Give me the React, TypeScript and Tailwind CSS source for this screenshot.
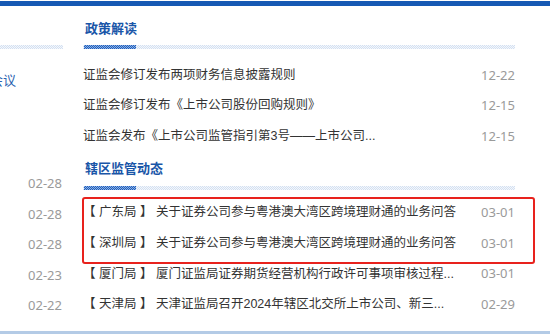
import React from 'react'

const policyNews = [
  { title: '证监会修订发布两项财务信息披露规则', date: '12-22' },
  { title: '证监会修订发布《上市公司股份回购规则》', date: '12-15' },
  { title: '证监会发布《上市公司监管指引第3号——上市公司...', date: '12-15' },
]

const localNews = [
  { bureau: '广东局', title: '关于证券公司参与粤港澳大湾区跨境理财通的业务问答', date: '03-01' },
  { bureau: '深圳局', title: '关于证券公司参与粤港澳大湾区跨境理财通的业务问答', date: '03-01' },
  { bureau: '厦门局', title: '厦门证监局证券期货经营机构行政许可事项审核过程...', date: '03-01' },
  { bureau: '天津局', title: '天津证监局召开2024年辖区北交所上市公司、新三...', date: '02-29' },
]

const leftDates = ['02-28', '02-28', '02-28', '02-23', '02-22']

function Underline({ dark }: { dark: boolean }) {
  return (
    <div className="relative h-[4px] w-full bg-[repeating-conic-gradient(#d3e0f1_0_25%,#f4f7fc_0_50%)] bg-[length:2px_2px]">
      {dark && (
        <div className="absolute left-[1px] top-0 h-[4px] w-[52px] bg-[repeating-conic-gradient(#1d5fc0_0_25%,#8fb0e0_0_50%)] bg-[length:2px_2px]" />
      )}
    </div>
  )
}

function Heading({ text }: { text: string }) {
  return (
    <div className="pl-[2px] text-[13px] font-bold leading-[20px] text-[#1a56a8]">{text}</div>
  )
}

export default function App() {
  return (
    <div className="relative h-[334px] w-[550px] overflow-hidden bg-white font-['Liberation_Sans','Noto_Sans_CJK_SC',sans-serif] [text-spacing-trim:space-all]">
      <div className="mt-[1px] h-[5px] w-full bg-[#1659b4]" />

      <div className="flex h-[325px]">
        {/* left column, cut off by the viewport */}
        <div className="w-[63px] shrink-0">
          <div className="h-[39px]" />
          <Underline dark={false} />
          <div className="ml-[-10px] mt-[22px] text-[13px] leading-[20px] text-[#2a62b0]">会议</div>
          <div className="mt-[77px] pr-[1px] text-right font-['Noto_Sans',sans-serif] text-[13px] text-[#9a9a9a]">
            {leftDates.map((d, i) => (
              <div key={i} className="h-[30.6px] leading-[30.6px]">
                {d}
              </div>
            ))}
          </div>
        </div>

        <div className="ml-[20px] w-[432px] shrink-0">
          <div className="mt-[13px]">
            <Heading text="政策解读" />
          </div>
          <div className="mt-[6px]">
            <Underline dark />
          </div>
          <div className="mt-[11px]">
            {policyNews.map((n, i) => (
              <div key={i} className="flex h-[30.5px] items-center justify-between text-[12.5px] text-[#333]">
                <span>{n.title}</span>
                <span className="font-['Noto_Sans',sans-serif] text-[13px] text-[#9a9a9a]">{n.date}</span>
              </div>
            ))}
          </div>

          <div className="mt-[7px]">
            <Heading text="辖区监管动态" />
          </div>
          <div className="mt-[7px]">
            <Underline dark />
          </div>
          <div className="mt-[8px]">
            {localNews.map((n, i) => (
              <div key={i} className="flex h-[30.6px] items-center justify-between text-[12.5px] text-[#333]">
                <span>
                  【 {n.bureau} 】 {n.title}
                </span>
                <span className="font-['Noto_Sans',sans-serif] text-[13px] text-[#9a9a9a]">{n.date}</span>
              </div>
            ))}
          </div>
        </div>
      </div>

      <div className="h-[3px] w-full bg-[#b4cbe6]" />

      {/* highlight box */}
      <div className="absolute left-[82px] top-[197px] h-[67px] w-[453px] rounded-[3px] border-2 border-[#e8221d]" />
    </div>
  )
}
